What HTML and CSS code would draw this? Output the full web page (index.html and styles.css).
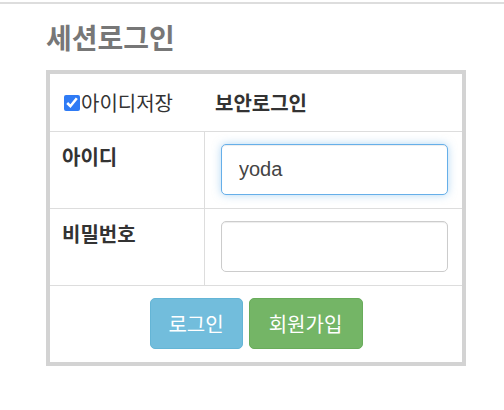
FILE: index.html
```html
<!DOCTYPE html>
<html lang="ko">

<head>
    <meta charset="UTF-8">
    <meta name="viewport" content="width=device-width, initial-scale=1.0">
    <title>세션로그인</title>
    <link rel="stylesheet" href="styles.css">
</head>

<body>
    <div class="topline"></div>
    <div class="wrap">
        <h2 class="title">세션로그인</h2>
        <table class="login-table">
            <tr class="row-head">
                <td class="cell-left">
                    <label class="save-id"><input type="checkbox" checked>아이디저장</label>
                </td>
                <td class="cell-right secure">보안로그인</td>
            </tr>
            <tr class="row-field">
                <th class="cell-left line">아이디</th>
                <td class="cell-right line"><input type="text" class="field focused" value="yoda"></td>
            </tr>
            <tr class="row-field">
                <th class="cell-left line">비밀번호</th>
                <td class="cell-right line"><input type="password" class="field"></td>
            </tr>
            <tr>
                <td colspan="2" class="cell-buttons">
                    <button class="btn btn-info">로그인</button>
                    <button class="btn btn-success">회원가입</button>
                </td>
            </tr>
        </table>
    </div>
</body>

</html>
```

FILE: styles.css
```css
body {
    margin: 0;
    font-family: "Noto Sans CJK KR", "Noto Sans", sans-serif;
    color: #333;
    background: #fff;
}

.topline {
    height: 2px;
    margin-top: 2px;
    background-color: #ddd;
}

.wrap {
    padding-left: 46px;
}

.title {
    margin: 16px 0 0 0;
    font-size: 28px;
    line-height: 34px;
    font-weight: bold;
    color: #777;
}

.login-table {
    margin-top: 16px;
    width: 420px;
    border: 4px solid #d3d3d3;
    border-collapse: separate;
    border-spacing: 0;
    font-size: 20px;
}

.login-table td,
.login-table th {
    padding: 0;
}

.row-head td {
    height: 57px;
    vertical-align: middle;
}

.cell-left {
    width: 152px;
    padding-left: 12px !important;
    text-align: left;
    vertical-align: top;
    font-weight: bold;
}

.row-head .cell-left {
    font-weight: normal;
}

.save-id {
    display: flex;
    align-items: center;
    padding-left: 2px;
}

.save-id input {
    width: 16px;
    height: 16px;
    margin: 0 1px 0 0;
    accent-color: #2f7bf5;
}

.secure {
    font-weight: bold;
    padding-left: 11px !important;
}

.line {
    border-top: 1px solid #ddd;
}

.row-field th {
    padding-top: 12px !important;
    line-height: 26px;
}

.row-field td {
    border-left: 1px solid #ddd;
    padding: 12px 14px 13px 16px !important;
}

.field {
    display: block;
    box-sizing: border-box;
    width: 227px;
    height: 51px;
    padding: 0 17px;
    border: 1px solid #ccc;
    border-radius: 5px;
    font-family: "Liberation Sans", Arial, sans-serif;
    font-size: 20px;
    color: #444;
    box-shadow: inset 0 1px 1px rgba(0, 0, 0, 0.075);
    outline: none;
}

.field.focused {
    border-color: #66afe9;
    box-shadow: inset 0 1px 1px rgba(0, 0, 0, 0.075), 0 0 8px rgba(102, 175, 233, 0.5);
}

.cell-buttons {
    border-top: 1px solid #ddd;
    padding: 12px 0 13px 0 !important;
    text-align: center;
    font-size: 0;
}

.btn {
    height: 51px;
    margin: 0 3px;
    border-radius: 5px;
    font-family: "Noto Sans CJK KR", sans-serif;
    font-size: 20px;
    color: #fff;
    cursor: pointer;
}

.btn-info {
    width: 93px;
    background-color: #72bddc;
    border: 1px solid #64b5d6;
}

.btn-success {
    width: 114px;
    background-color: #74b566;
    border: 1px solid #69ac5b;
}
```
